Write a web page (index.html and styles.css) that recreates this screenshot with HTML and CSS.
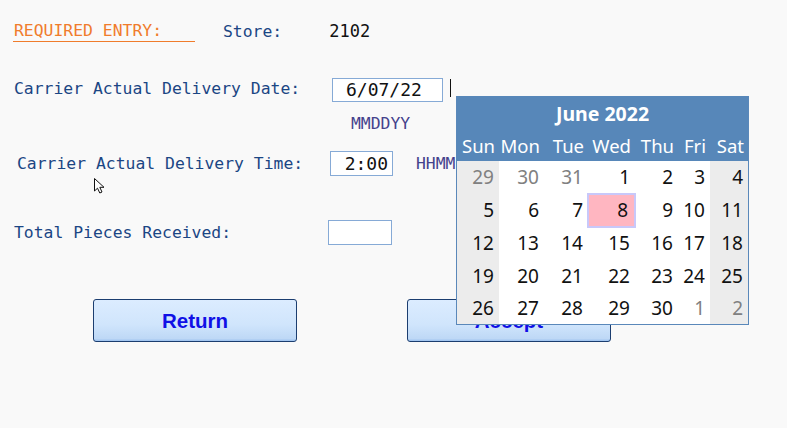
FILE: index.html
```html
<!DOCTYPE html>
<html>
<head>
<meta charset="utf-8">
<link rel="stylesheet" href="styles.css">
</head>
<body>
<div class="page">
  <div class="row row-top">
    <span class="req">REQUIRED ENTRY:</span>
    <span class="lbl store-lbl">Store:</span>
    <span class="store-val">2102</span>
  </div>

  <div class="row row-date">
    <span class="lbl lbl-date">Carrier Actual Delivery Date:</span>
    <span class="field field-date">6/07/22</span>
    <span class="caret"></span>
  </div>
  <div class="hint hint-date">MMDDYY</div>

  <div class="row row-time">
    <span class="lbl lbl-time">Carrier Actual Delivery Time:</span>
    <span class="field field-time">2:00</span>
    <span class="hint hint-time">HHMM</span>
  </div>

  <div class="row row-pieces">
    <span class="lbl lbl-pieces">Total Pieces Received:</span>
    <span class="field field-pieces"></span>
  </div>

  <div class="buttons">
    <button class="btn btn-return">Return</button>
    <button class="btn btn-accept">Accept</button>
  </div>

  <svg class="mouse" width="14" height="18" viewBox="0 0 14 18">
    <path d="M1.5 1.5 L1.5 14 L4.5 11.2 L6.8 16 L9 15 L6.8 10.3 L11 10.3 Z" fill="#fff" stroke="#111" stroke-width="1" stroke-linejoin="miter"/>
  </svg>

  <div class="cal">
    <div class="cal-title">June 2022</div>
    <table class="cal-grid">
      <colgroup>
        <col class="c1"><col class="c2"><col class="c3"><col class="c4"><col class="c5"><col class="c6"><col class="c7">
      </colgroup>
      <thead>
        <tr><th>Sun</th><th>Mon</th><th>Tue</th><th>Wed</th><th>Thu</th><th>Fri</th><th>Sat</th></tr>
      </thead>
      <tbody>
        <tr><td class="we other">29</td><td class="other">30</td><td class="other">31</td><td>1</td><td>2</td><td>3</td><td class="we">4</td></tr>
        <tr><td class="we">5</td><td>6</td><td>7</td><td class="sel">8</td><td>9</td><td>10</td><td class="we">11</td></tr>
        <tr><td class="we">12</td><td>13</td><td>14</td><td>15</td><td>16</td><td>17</td><td class="we">18</td></tr>
        <tr><td class="we">19</td><td>20</td><td>21</td><td>22</td><td>23</td><td>24</td><td class="we">25</td></tr>
        <tr><td class="we">26</td><td>27</td><td>28</td><td>29</td><td>30</td><td class="other">1</td><td class="we other">2</td></tr>
      </tbody>
    </table>
  </div>
</div>
</body>
</html>
```

FILE: styles.css
```css
html, body {
  margin: 0;
  padding: 0;
  background: #f9f9f9;
}

.page {
  position: relative;
  width: 787px;
  height: 428px;
  padding: 20px 0 0 14px;
  box-sizing: border-box;
  font-family: "DejaVu Sans Mono", monospace;
  font-size: 16.4px;
  color: #1b4684;
}

.row {
  display: flex;
  align-items: center;
}

.row-top {
  height: 22px;
}

.req {
  display: inline-block;
  width: 182px;
  height: 22px;
  line-height: 22px;
  color: #f07c2c;
  border-bottom: 1px solid #f07c2c;
  box-sizing: border-box;
  margin-left: -1px;
  padding-left: 1px;
}

.store-lbl {
  margin-left: 28px;
}

.store-val {
  margin-left: 47px;
  color: #111;
  font-size: 17px;
}

.row-date {
  margin-top: 36px;
  height: 24px;
}

.lbl-date {
  width: 318px;
  padding-bottom: 3px;
}

.field {
  display: inline-block;
  box-sizing: border-box;
  background: #fff;
  border: 1px solid #86aad6;
  color: #111;
  font-size: 18px;
}

.field-date {
  width: 111px;
  height: 24px;
  line-height: 22px;
  padding-left: 13px;
}

.caret {
  display: inline-block;
  width: 1px;
  height: 18px;
  background: #111;
  margin-left: 7px;
  margin-bottom: 4px;
}

.hint {
  color: #45428c;
}

.hint-date {
  margin-top: 14px;
  margin-left: 337px;
  height: 16px;
  line-height: 16px;
}

.row-time {
  margin-top: 19px;
  height: 25px;
}

.lbl-time {
  width: 313px;
  margin-left: 3px;
}

.field-time {
  width: 63px;
  height: 25px;
  line-height: 23px;
  text-align: right;
  padding-right: 4px;
}

.hint-time {
  margin-left: 23px;
}

.row-pieces {
  margin-top: 44px;
  height: 25px;
}

.lbl-pieces {
  width: 314px;
}

.field-pieces {
  width: 64px;
  height: 25px;
}

.buttons {
  display: flex;
  margin-top: 54px;
  margin-left: 79px;
  gap: 110px;
}

.btn {
  width: 204px;
  height: 43px;
  border: 1px solid #1c3e70;
  border-radius: 3px;
  background: linear-gradient(#dcecff 0%, #d0e5fc 60%, #bed8f6 94%, #9dc2ef 100%);
  font-family: "Liberation Sans", Arial, sans-serif;
  font-weight: bold;
  font-size: 20.5px;
  color: #1010e6;
  padding: 0;
}

.mouse {
  position: absolute;
  left: 93px;
  top: 177px;
}

.cal {
  position: absolute;
  left: 456px;
  top: 96px;
  width: 293px;
  box-sizing: border-box;
  border: 1px solid #5a88ba;
  border-top: 0;
  background: #5787b9;
  font-family: "Noto Sans", "Open Sans", sans-serif;
}

.cal-title {
  height: 34px;
  line-height: 36px;
  text-align: center;
  color: #fff;
  font-weight: bold;
  font-size: 19.5px;
}

.cal-grid {
  border-collapse: collapse;
  table-layout: fixed;
  width: 291px;
}

.c1 { width: 42px; }
.c2 { width: 45px; }
.c3 { width: 44px; }
.c4 { width: 47px; }
.c5 { width: 43px; }
.c6 { width: 32px; }
.c7 { width: 38px; }

.cal-grid th {
  height: 31px;
  padding: 0 4px 0 0;
  text-align: right;
  color: #fff;
  font-weight: normal;
  font-size: 18.5px;
  line-height: 31px;
  white-space: nowrap;
}

.cal-grid td {
  height: 33px;
  padding: 0 5px 0 0;
  text-align: right;
  background: #fff;
  color: #111;
  font-size: 19px;
  line-height: 33px;
}

.cal-grid tbody tr:last-child td {
  height: 31px;
  line-height: 31px;
}

.cal-grid td.we {
  background: #ececec;
}

.cal-grid td.other {
  color: #808080;
}

.cal-grid td.sel {
  background: #ffb6c1;
  outline: 2px solid #c8c8fa;
  outline-offset: -1px;
  padding-right: 7px;
}
```
